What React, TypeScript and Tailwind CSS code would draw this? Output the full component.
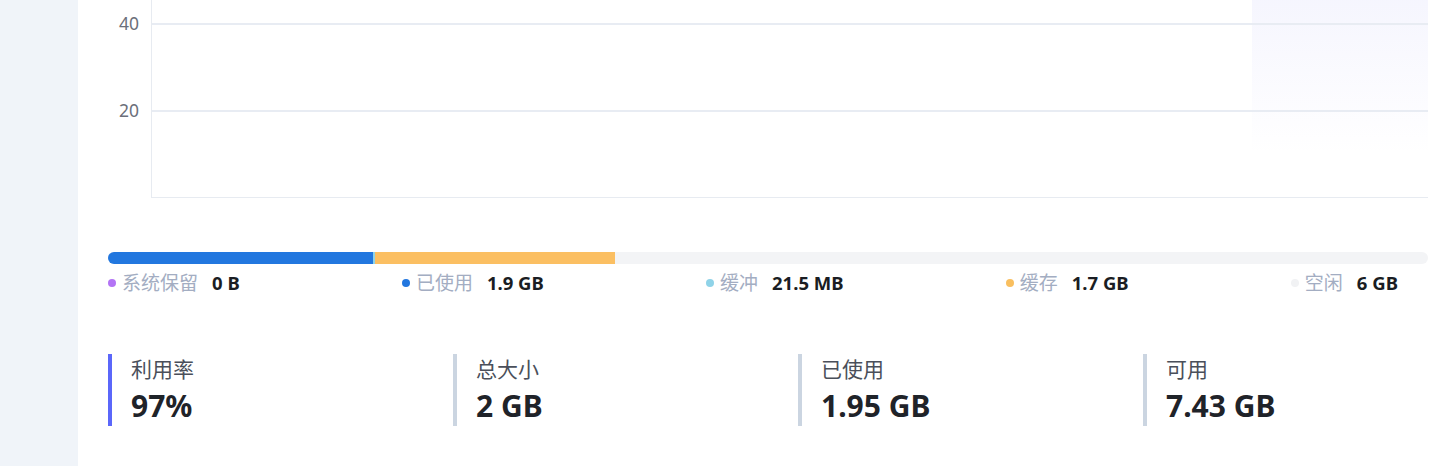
const LEGEND = [
  { dot: 'bg-[#b374f5]', label: '系统保留', value: '0 B' },
  { dot: 'bg-[#2277df]', label: '已使用', value: '1.9 GB' },
  { dot: 'bg-[#8fd3e8]', label: '缓冲', value: '21.5 MB' },
  { dot: 'bg-[#f9bf5f]', label: '缓存', value: '1.7 GB' },
  { dot: 'bg-[#f1f2f4]', label: '空闲', value: '6 GB' },
]

const STATS = [
  { label: '利用率', value: '97%', accent: true },
  { label: '总大小', value: '2 GB' },
  { label: '已使用', value: '1.95 GB' },
  { label: '可用', value: '7.43 GB' },
]

function Chart() {
  return (
    <div className="flex h-[198px]">
      <div className="relative w-[43px] shrink-0 text-[17.5px] text-[#6b6f7a]">
        <span className="absolute right-[12px] top-[11px] leading-[24px]">40</span>
        <span className="absolute right-[12px] top-[98px] leading-[24px]">20</span>
      </div>
      <svg className="h-[198px] flex-1" viewBox="0 0 1277 198" preserveAspectRatio="none">
        <defs>
          <linearGradient id="hl" x1="0" y1="0" x2="0" y2="1">
            <stop offset="0" stopColor="#6366f1" stopOpacity="0.06" />
            <stop offset="1" stopColor="#6366f1" stopOpacity="0" />
          </linearGradient>
        </defs>
        <rect x="1101" y="0" width="176" height="155" fill="url(#hl)" />
        <line x1="0" y1="24" x2="1277" y2="24" stroke="#e8ecf3" strokeWidth="2" />
        <line x1="0" y1="111" x2="1277" y2="111" stroke="#e8ecf3" strokeWidth="2" />
        <line x1="0.5" y1="0" x2="0.5" y2="198" stroke="#e7ebf1" strokeWidth="1" />
        <line x1="0" y1="197.5" x2="1277" y2="197.5" stroke="#e7ebf1" strokeWidth="1" />
      </svg>
    </div>
  )
}

export default function App() {
  return (
    <div
      className="flex h-[466px] w-[1453px] overflow-hidden bg-white"
      style={{ fontFamily: '"Noto Sans", "Noto Sans CJK SC", sans-serif' }}
    >
      <aside className="w-[78px] shrink-0 bg-[#f0f4f9]" />
      <main className="flex-1 pl-[30px] pr-[25px]">
        <Chart />

        {/* memory bar */}
        <div className="mt-[54px] flex h-[12px] overflow-hidden rounded-full bg-[#f3f4f6]">
          <div className="w-[265px] bg-[#2277df]" />
          <div className="w-[2px] bg-[#8fd3e8]" />
          <div className="w-[240px] bg-[#fbbf62]" />
        </div>

        <div className="mt-[6px] flex items-center justify-between pr-[30px]">
          {LEGEND.map((l) => (
            <div key={l.label} className="flex items-center">
              <span className={`mr-[6px] h-[8px] w-[8px] rounded-full ${l.dot}`} />
              <span className="text-[19px] leading-[26px] text-[#a3adc2]">{l.label}</span>
              <span className="ml-[14px] text-[18.5px] font-bold leading-[26px] text-[#1a1d23]">{l.value}</span>
            </div>
          ))}
        </div>

        <div className="mt-[58px] grid grid-cols-4 gap-[60px]">
          {STATS.map((s) => (
            <div
              key={s.label}
              className={`flex h-[72px] flex-col justify-center border-l-4 pl-[19px] ${
                s.accent ? 'border-[#5b67fa]' : 'border-[#cbd5e1]'
              }`}
            >
              <div className="text-[21px] leading-[28px] text-[#4a4f5a]">{s.label}</div>
              <div className="mt-[4px] text-[30px] font-bold leading-[38px] text-[#1f2329]">{s.value}</div>
            </div>
          ))}
        </div>
      </main>
    </div>
  )
}
